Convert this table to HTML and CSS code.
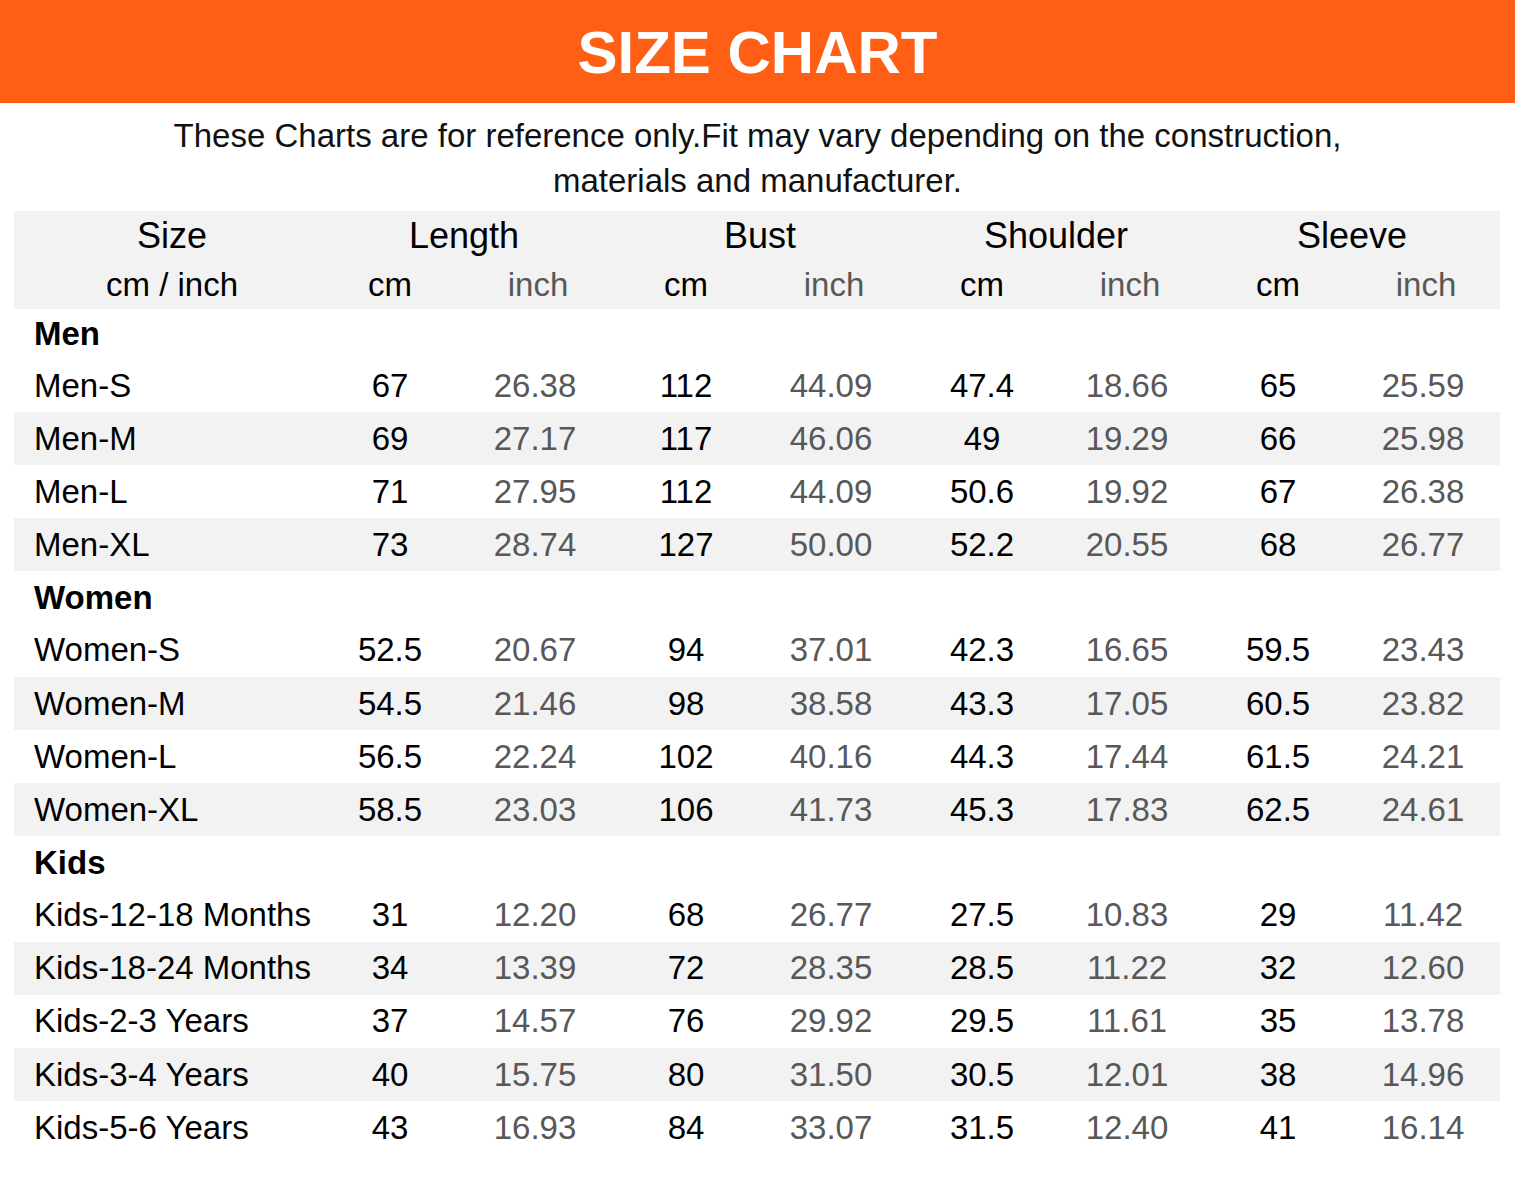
FILE: index.html
```html
<!DOCTYPE html>
<html>
<head>
<meta charset="utf-8">
<link rel="stylesheet" href="styles.css">
</head>
<body>
<header class="banner"><h1 class="title">SIZE CHART</h1></header>
<p class="note">These Charts are for reference only.Fit may vary depending on the construction,<br>materials and manufacturer.</p>
<table class="chart">
  <colgroup>
    <col class="c-size">
    <col class="c-val"><col class="c-val"><col class="c-val"><col class="c-val">
    <col class="c-val"><col class="c-val"><col class="c-val"><col class="c-val">
  </colgroup>
  <thead>
    <tr class="h1">
      <th class="size-h">Size</th>
      <th colspan="2">Length</th>
      <th colspan="2">Bust</th>
      <th colspan="2">Shoulder</th>
      <th colspan="2">Sleeve</th>
    </tr>
    <tr class="h2">
      <th class="size-h">cm / inch</th>
      <th>cm</th><th class="in">inch</th>
      <th>cm</th><th class="in">inch</th>
      <th>cm</th><th class="in">inch</th>
      <th>cm</th><th class="in">inch</th>
    </tr>
  </thead>
  <tbody>
    <tr class="group first"><td colspan="9">Men</td></tr>
    <tr><td class="name">Men-S</td><td>67</td><td class="in">26.38</td><td>112</td><td class="in">44.09</td><td>47.4</td><td class="in">18.66</td><td>65</td><td class="in">25.59</td></tr>
    <tr class="alt"><td class="name">Men-M</td><td>69</td><td class="in">27.17</td><td>117</td><td class="in">46.06</td><td>49</td><td class="in">19.29</td><td>66</td><td class="in">25.98</td></tr>
    <tr><td class="name">Men-L</td><td>71</td><td class="in">27.95</td><td>112</td><td class="in">44.09</td><td>50.6</td><td class="in">19.92</td><td>67</td><td class="in">26.38</td></tr>
    <tr class="alt"><td class="name">Men-XL</td><td>73</td><td class="in">28.74</td><td>127</td><td class="in">50.00</td><td>52.2</td><td class="in">20.55</td><td>68</td><td class="in">26.77</td></tr>
    <tr class="group"><td colspan="9">Women</td></tr>
    <tr><td class="name">Women-S</td><td>52.5</td><td class="in">20.67</td><td>94</td><td class="in">37.01</td><td>42.3</td><td class="in">16.65</td><td>59.5</td><td class="in">23.43</td></tr>
    <tr class="alt"><td class="name">Women-M</td><td>54.5</td><td class="in">21.46</td><td>98</td><td class="in">38.58</td><td>43.3</td><td class="in">17.05</td><td>60.5</td><td class="in">23.82</td></tr>
    <tr><td class="name">Women-L</td><td>56.5</td><td class="in">22.24</td><td>102</td><td class="in">40.16</td><td>44.3</td><td class="in">17.44</td><td>61.5</td><td class="in">24.21</td></tr>
    <tr class="alt"><td class="name">Women-XL</td><td>58.5</td><td class="in">23.03</td><td>106</td><td class="in">41.73</td><td>45.3</td><td class="in">17.83</td><td>62.5</td><td class="in">24.61</td></tr>
    <tr class="group"><td colspan="9">Kids</td></tr>
    <tr><td class="name">Kids-12-18 Months</td><td>31</td><td class="in">12.20</td><td>68</td><td class="in">26.77</td><td>27.5</td><td class="in">10.83</td><td>29</td><td class="in">11.42</td></tr>
    <tr class="alt"><td class="name">Kids-18-24 Months</td><td>34</td><td class="in">13.39</td><td>72</td><td class="in">28.35</td><td>28.5</td><td class="in">11.22</td><td>32</td><td class="in">12.60</td></tr>
    <tr><td class="name">Kids-2-3 Years</td><td>37</td><td class="in">14.57</td><td>76</td><td class="in">29.92</td><td>29.5</td><td class="in">11.61</td><td>35</td><td class="in">13.78</td></tr>
    <tr class="alt"><td class="name">Kids-3-4 Years</td><td>40</td><td class="in">15.75</td><td>80</td><td class="in">31.50</td><td>30.5</td><td class="in">12.01</td><td>38</td><td class="in">14.96</td></tr>
    <tr><td class="name">Kids-5-6 Years</td><td>43</td><td class="in">16.93</td><td>84</td><td class="in">33.07</td><td>31.5</td><td class="in">12.40</td><td>41</td><td class="in">16.14</td></tr>
  </tbody>
</table>
</body>
</html>
```
FILE: styles.css
```css
html, body {
  margin: 0;
  padding: 0;
  background: #ffffff;
}
body {
  font-family: "Liberation Sans", Arial, sans-serif;
  color: #000;
}
.banner {
  background: #ff5f15;
  height: 103px;
  display: flex;
  align-items: center;
  justify-content: center;
}
.title {
  margin: 0;
  color: #fff;
  font-size: 60px;
  font-weight: 700;
  line-height: 1;
  padding-top: 2px;
}
.note {
  margin: 10px 0 8px;
  text-align: center;
  font-size: 33px;
  line-height: 45px;
  color: #111;
}
.chart {
  margin-left: 14px;
  width: 1486px;
  border-collapse: collapse;
  table-layout: fixed;
  font-size: 33px;
}
.c-size { width: 302px; }
.c-val { width: 148px; }
.chart th {
  font-weight: 400;
  padding: 0;
  text-align: center;
  vertical-align: middle;
}
.chart thead tr {
  background: #f2f2f2;
}
.h1 th {
  height: 49px;
  font-size: 36px;
}
.h2 th {
  height: 49px;
}
.size-h {
  padding-left: 14px !important;
}
.chart td {
  height: 53.1px;
  padding: 0;
  text-align: center;
  vertical-align: middle;
}
.chart .in {
  color: #585858;
  padding-right: 6px;
}
.chart thead .in {
  padding-right: 0;
}
.chart td.name {
  text-align: left;
  padding-left: 20px;
  white-space: nowrap;
}
.chart .group td {
  height: 52.5px;
  text-align: left;
  padding-left: 20px;
  font-weight: 700;
}
.chart .group.first td {
  height: 50px;
}
.alt {
  background: #f2f2f2;
}
```
